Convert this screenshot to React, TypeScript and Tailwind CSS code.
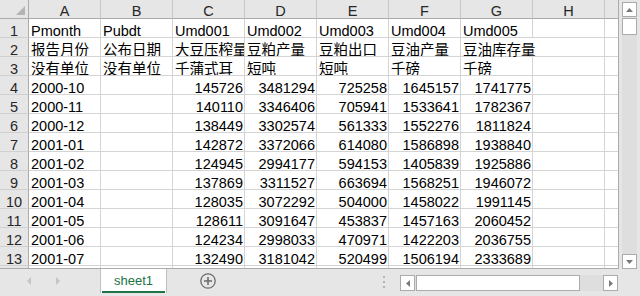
import React from 'react';

const cols = ['A', 'B', 'C', 'D', 'E', 'F', 'G', 'H', ''];

const data: string[][] = [
  ['Pmonth', 'Pubdt', 'Umd001', 'Umd002', 'Umd003', 'Umd004', 'Umd005'],
  ['报告月份', '公布日期', '大豆压榨量', '豆粕产量', '豆粕出口', '豆油产量', '豆油库存量'],
  ['没有单位', '没有单位', '千蒲式耳', '短吨', '短吨', '千磅', '千磅'],
  ['2000-10', '', '145726', '3481294', '725258', '1645157', '1741775'],
  ['2000-11', '', '140110', '3346406', '705941', '1533641', '1782367'],
  ['2000-12', '', '138449', '3302574', '561333', '1552276', '1811824'],
  ['2001-01', '', '142872', '3372066', '614080', '1586898', '1938840'],
  ['2001-02', '', '124945', '2994177', '594153', '1405839', '1925886'],
  ['2001-03', '', '137869', '3311527', '663694', '1568251', '1946072'],
  ['2001-04', '', '128035', '3072292', '504000', '1458022', '1991145'],
  ['2001-05', '', '128611', '3091647', '453837', '1457163', '2060452'],
  ['2001-06', '', '124234', '2998033', '470971', '1422203', '2036755'],
  ['2001-07', '', '132490', '3181042', '520499', '1506194', '2333689'],
  ['', '', '', '', '', '', ''],
];

function Cell({ text, numeric, overflow }: { text: string; numeric: boolean; overflow: boolean }) {
  if (overflow) {
    return (
      <div className="w-[72px] h-[19px] shrink-0 border-b border-r border-b-[#d4d4d4] border-r-transparent whitespace-nowrap pt-[4px] leading-[16px] pl-[2px] text-black">
        {text}
      </div>
    );
  }
  return (
    <div
      className={
        numeric
          ? 'w-[72px] h-[19px] shrink-0 border-b border-r border-[#d4d4d4] overflow-hidden whitespace-nowrap pt-[4px] leading-[16px] pr-[1px] text-right text-black'
          : 'w-[72px] h-[19px] shrink-0 border-b border-r border-[#d4d4d4] overflow-hidden whitespace-nowrap pt-[4px] leading-[16px] pl-[2px] text-black'
      }
    >
      {text}
    </div>
  );
}

function Tri({ dir, color, w = 7, h = 4 }: { dir: 'up' | 'down' | 'left' | 'right'; color: string; w?: number; h?: number }) {
  let pts = '';
  if (dir === 'up') pts = `0,${h} ${w},${h} ${w / 2},0`;
  if (dir === 'down') pts = `0,0 ${w},0 ${w / 2},${h}`;
  if (dir === 'left') pts = `${w},0 ${w},${h} 0,${h / 2}`;
  if (dir === 'right') pts = `0,0 0,${h} ${w},${h / 2}`;
  return (
    <svg width={w} height={h} viewBox={`0 0 ${w} ${h}`}>
      <polygon points={pts} fill={color} />
    </svg>
  );
}

export default function App() {
  return (
    <div className="w-[640px] h-[296px] bg-[#e6e6e6] flex flex-col overflow-hidden font-['Liberation_Sans','Noto_Sans_CJK_SC',sans-serif] text-[14.5px]">
      <div className="flex h-[269px] shrink-0">
        {/* grid */}
        <div className="w-[619px] h-[269px] shrink-0 bg-white border-r border-b border-[#ababab] overflow-hidden">
          {/* header row */}
          <div className="flex">
            <div className="w-[29px] h-[19px] shrink-0 bg-[#e6e6e6] border-r border-b border-[#ababab] flex justify-end items-end pr-[3px] pb-[3px]">
              <svg width="9" height="9" viewBox="0 0 9 9">
                <polygon points="9,0 9,9 0,9" fill="#b4b4b4" />
              </svg>
            </div>
            {cols.map((c, i) => (
              <div
                key={i}
                className="w-[72px] h-[19px] shrink-0 bg-[#e6e6e6] border-r border-b border-r-[#c8c8c8] border-b-[#ababab] text-center pt-[3px] leading-[16px] text-[#262626]"
              >
                {c}
              </div>
            ))}
          </div>
          {data.map((row, ri) => (
            <div key={ri} className="flex">
              <div className="w-[29px] h-[19px] shrink-0 bg-[#e6e6e6] border-r border-b border-r-[#ababab] border-b-[#d0d0d0] text-center pt-[4px] leading-[16px] text-[#262626]">
                {ri < 13 ? ri + 1 : ''}
              </div>
              {row.map((v, ci) => (
                <Cell
                  key={ci}
                  text={v}
                  numeric={ri >= 3 && ci >= 2}
                  overflow={ri === 1 && ci === 6}
                />
              ))}
              <Cell text="" numeric={false} overflow={false} />
              <Cell text="" numeric={false} overflow={false} />
            </div>
          ))}
        </div>
        {/* vertical scrollbar */}
        <div className="ml-[3px] mt-[2px] w-[15px] h-[267px] flex flex-col bg-[#dedede]">
          <div className="h-[15px] bg-white border border-[#ababab] flex items-center justify-center">
            <Tri dir="up" color="#7a7a7a" />
          </div>
          <div className="mt-[1px] h-[17px] bg-white border border-[#ababab]" />
          <div className="flex-1" />
          <div className="h-[15px] bg-white border border-[#ababab] flex items-center justify-center">
            <Tri dir="down" color="#7a7a7a" />
          </div>
        </div>
      </div>
      {/* tab bar */}
      <div className="flex h-[27px] items-start">
        <div className="w-[100px] h-[24px] flex items-center">
          <div className="ml-[27px]">
            <Tri dir="left" color="#c4c4c4" w={4} h={8} />
          </div>
          <div className="ml-[25px]">
            <Tri dir="right" color="#c4c4c4" w={4} h={8} />
          </div>
        </div>
        <div className="w-[67px] h-[24px] bg-white border-l border-r border-[#c0c0c0] flex flex-col">
          <div className="flex-1 flex items-center justify-center text-[13px] text-[#217346] pt-[1px]">sheet1</div>
          <div className="h-[2px] mx-[1px] bg-[#217346]" />
        </div>
        <div className="ml-[33px] mt-[4px] w-[16px] h-[16px]">
          <svg width="16" height="16" viewBox="0 0 16 16">
            <circle cx="8" cy="8" r="7.2" fill="none" stroke="#6e6e6e" strokeWidth="1.3" />
            <line x1="8" y1="4" x2="8" y2="12" stroke="#6e6e6e" strokeWidth="1.6" />
            <line x1="4" y1="8" x2="12" y2="8" stroke="#6e6e6e" strokeWidth="1.6" />
          </svg>
        </div>
        <div className="ml-[167px] mt-[7px] flex flex-col gap-[3px]">
          <div className="w-[2px] h-[2px] bg-[#b4b4b4]" />
          <div className="w-[2px] h-[2px] bg-[#b4b4b4]" />
          <div className="w-[2px] h-[2px] bg-[#b4b4b4]" />
        </div>
        {/* horizontal scrollbar */}
        <div className="ml-[15px] mt-[6px] w-[218px] h-[16px] flex bg-[#dedede]">
          <div className="w-[15px] h-[16px] bg-white border border-[#ababab] flex items-center justify-center">
            <Tri dir="left" color="#7a7a7a" w={4} h={7} />
          </div>
          <div className="ml-[1px] w-[164px] h-[16px] bg-white border border-[#ababab]" />
          <div className="flex-1" />
          <div className="w-[15px] h-[16px] bg-white border border-[#ababab] flex items-center justify-center">
            <Tri dir="right" color="#7a7a7a" w={4} h={7} />
          </div>
        </div>
      </div>
    </div>
  );
}
